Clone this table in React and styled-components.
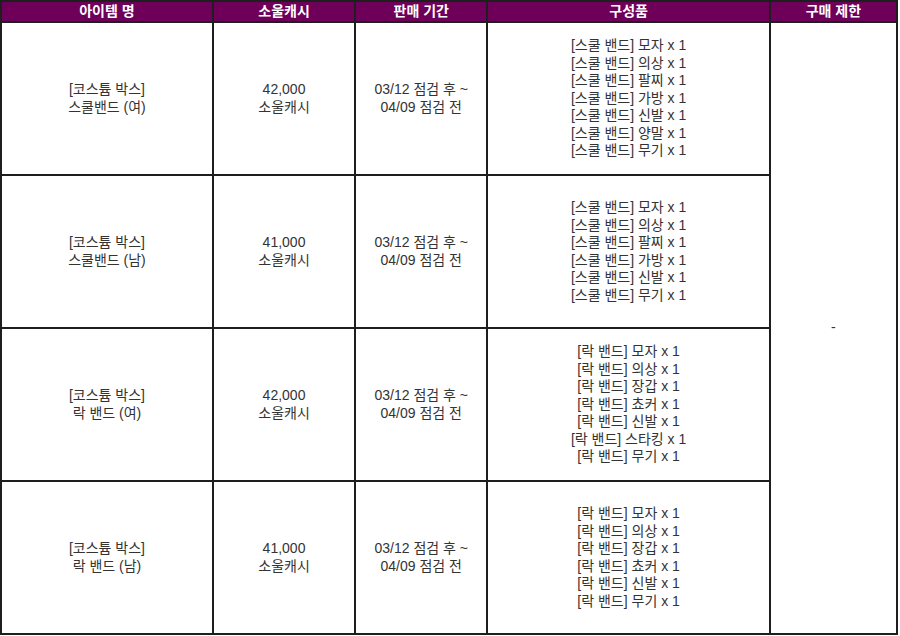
import React from "react";
import styled, { createGlobalStyle } from "styled-components";

const GlobalStyle = createGlobalStyle`
  html, body {
    margin: 0;
    padding: 0;
    background: #fff;
  }
  body {
    font-family: "Liberation Sans", "Noto Sans CJK KR", sans-serif;
  }
`;

const Table = styled.table`
  border-collapse: collapse;
  table-layout: fixed;
  width: 898px;
  margin: 0;
  color: #333;
  font-size: 14px;
  line-height: 17.5px;

  th,
  td {
    border: 2px solid #1e1e1e;
    text-align: center;
    vertical-align: middle;
    padding: 0;
  }
`;

const Col = styled.col`
  width: ${(p) => p.$w}px;
`;

const HeadCell = styled.th`
  background: #6e005a;
  color: #fff;
  font-size: 14px;
  font-weight: bold;
  height: 19px;
  line-height: 19px;
`;

const Row = styled.tr`
  height: 153px;
`;

const Lines = styled.div`
  display: flex;
  flex-direction: column;
  align-items: center;
  white-space: nowrap;
`;

const columns = [
  { label: "아이템 명", w: 210 },
  { label: "소울캐시", w: 141 },
  { label: "판매 기간", w: 131 },
  { label: "구성품", w: 280 },
  { label: "구매 제한", w: 126 },
];

const school = (parts) => parts.map((p) => `[스쿨 밴드] ${p} x 1`);
const rock = (parts) => parts.map((p) => `[락 밴드] ${p} x 1`);

const items = [
  {
    name: ["[코스튬 박스]", "스쿨밴드 (여)"],
    price: "42,000",
    parts: school(["모자", "의상", "팔찌", "가방", "신발", "양말", "무기"]),
  },
  {
    name: ["[코스튬 박스]", "스쿨밴드 (남)"],
    price: "41,000",
    parts: school(["모자", "의상", "팔찌", "가방", "신발", "무기"]),
  },
  {
    name: ["[코스튬 박스]", "락 밴드 (여)"],
    price: "42,000",
    parts: rock(["모자", "의상", "장갑", "쵸커", "신발", "스타킹", "무기"]),
  },
  {
    name: ["[코스튬 박스]", "락 밴드 (남)"],
    price: "41,000",
    parts: rock(["모자", "의상", "장갑", "쵸커", "신발", "무기"]),
  },
];

const Multi = ({ lines }) => (
  <Lines>
    {lines.map((l, i) => (
      <span key={i}>{l}</span>
    ))}
  </Lines>
);

export default function App() {
  return (
    <>
      <GlobalStyle />
      <Table>
        <colgroup>
          {columns.map((c) => (
            <Col key={c.label} $w={c.w} />
          ))}
        </colgroup>
        <thead>
          <tr>
            {columns.map((c) => (
              <HeadCell key={c.label}>{c.label}</HeadCell>
            ))}
          </tr>
        </thead>
        <tbody>
          {items.map((item, i) => (
            <Row key={i}>
              <td>
                <Multi lines={item.name} />
              </td>
              <td>
                <Multi lines={[item.price, "소울캐시"]} />
              </td>
              <td>
                <Multi lines={["03/12 점검 후 ~", "04/09 점검 전"]} />
              </td>
              <td>
                <Multi lines={item.parts} />
              </td>
              {i === 0 && <td rowSpan={items.length}>-</td>}
            </Row>
          ))}
        </tbody>
      </Table>
    </>
  );
}
